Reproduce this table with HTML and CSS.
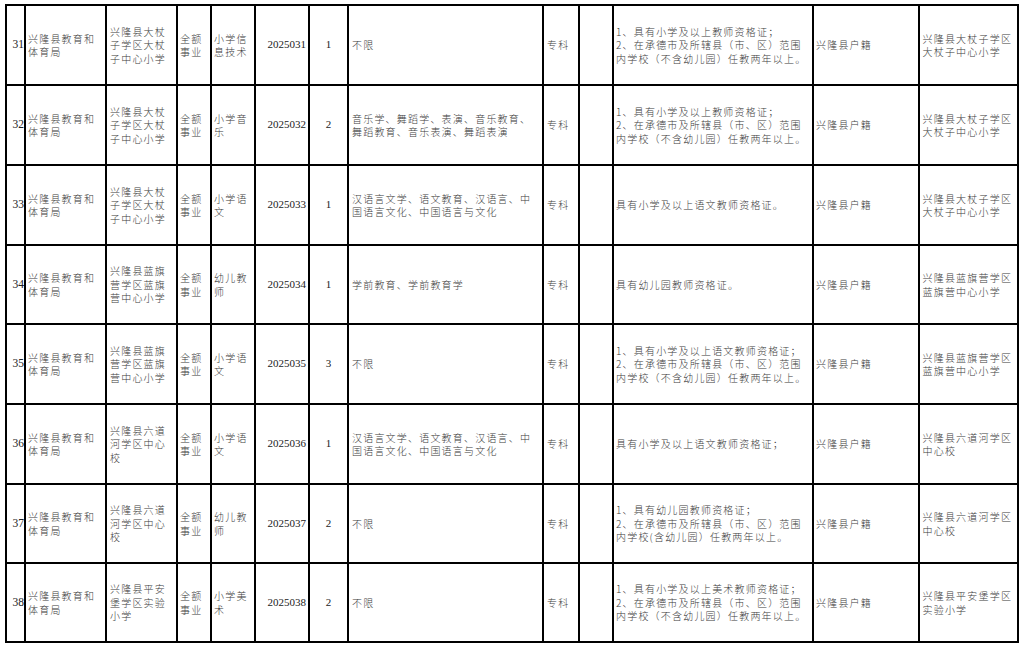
FILE: index.html
```html
<!DOCTYPE html>
<html lang="zh-CN">
<head>
<meta charset="utf-8">
<title>岗位表</title>
<link rel="stylesheet" href="styles.css">
</head>
<body>
<table class="grid">
  <colgroup>
    <col class="c-no"><col class="c-dept"><col class="c-unit"><col class="c-type"><col class="c-post"><col class="c-code"><col class="c-num"><col class="c-major"><col class="c-edu"><col class="c-blank"><col class="c-req"><col class="c-hukou"><col class="c-place">
  </colgroup>
  <tbody>
    <tr class="r78">
      <td class="no">31</td>
      <td>兴隆县教育和<br>体育局</td>
      <td class="unit">兴隆县大杖<br>子学区大杖<br>子中心小学</td>
      <td>全额<br>事业</td>
      <td>小学信<br>息技术</td>
      <td class="code">2025031</td>
      <td class="num">1</td>
      <td class="major">不限</td>
      <td class="edu">专科</td>
      <td></td>
      <td>1、具有小学及以上教师资格证；<br>2、在承德市及所辖县（市、区）范围<br>内学校（不含幼儿园）任教两年以上。</td>
      <td>兴隆县户籍</td>
      <td class="place">兴隆县大杖子学区<br>大杖子中心小学</td>
    </tr>
    <tr class="r78">
      <td class="no">32</td>
      <td>兴隆县教育和<br>体育局</td>
      <td class="unit">兴隆县大杖<br>子学区大杖<br>子中心小学</td>
      <td>全额<br>事业</td>
      <td>小学音<br>乐</td>
      <td class="code">2025032</td>
      <td class="num">2</td>
      <td class="major">音乐学、舞蹈学、表演、音乐教育、<br>舞蹈教育、音乐表演、舞蹈表演</td>
      <td class="edu">专科</td>
      <td></td>
      <td>1、具有小学及以上教师资格证；<br>2、在承德市及所辖县（市、区）范围<br>内学校（不含幼儿园）任教两年以上。</td>
      <td>兴隆县户籍</td>
      <td class="place">兴隆县大杖子学区<br>大杖子中心小学</td>
    </tr>
    <tr class="r78">
      <td class="no">33</td>
      <td>兴隆县教育和<br>体育局</td>
      <td class="unit">兴隆县大杖<br>子学区大杖<br>子中心小学</td>
      <td>全额<br>事业</td>
      <td>小学语<br>文</td>
      <td class="code">2025033</td>
      <td class="num">1</td>
      <td class="major">汉语言文学、语文教育、汉语言、中<br>国语言文化、中国语言与文化</td>
      <td class="edu">专科</td>
      <td></td>
      <td>具有小学及以上语文教师资格证。</td>
      <td>兴隆县户籍</td>
      <td class="place">兴隆县大杖子学区<br>大杖子中心小学</td>
    </tr>
    <tr class="r77">
      <td class="no">34</td>
      <td>兴隆县教育和<br>体育局</td>
      <td class="unit">兴隆县蓝旗<br>营学区蓝旗<br>营中心小学</td>
      <td>全额<br>事业</td>
      <td>幼儿教<br>师</td>
      <td class="code">2025034</td>
      <td class="num">1</td>
      <td class="major">学前教育、学前教育学</td>
      <td class="edu">专科</td>
      <td></td>
      <td>具有幼儿园教师资格证。</td>
      <td>兴隆县户籍</td>
      <td class="place">兴隆县蓝旗营学区<br>蓝旗营中心小学</td>
    </tr>
    <tr class="r78">
      <td class="no">35</td>
      <td>兴隆县教育和<br>体育局</td>
      <td class="unit">兴隆县蓝旗<br>营学区蓝旗<br>营中心小学</td>
      <td>全额<br>事业</td>
      <td>小学语<br>文</td>
      <td class="code">2025035</td>
      <td class="num">3</td>
      <td class="major">不限</td>
      <td class="edu">专科</td>
      <td></td>
      <td>1、具有小学及以上语文教师资格证；<br>2、在承德市及所辖县（市、区）范围<br>内学校（不含幼儿园）任教两年以上。</td>
      <td>兴隆县户籍</td>
      <td class="place">兴隆县蓝旗营学区<br>蓝旗营中心小学</td>
    </tr>
    <tr class="r78">
      <td class="no">36</td>
      <td>兴隆县教育和<br>体育局</td>
      <td class="unit">兴隆县六道<br>河学区中心<br>校</td>
      <td>全额<br>事业</td>
      <td>小学语<br>文</td>
      <td class="code">2025036</td>
      <td class="num">1</td>
      <td class="major">汉语言文学、语文教育、汉语言、中<br>国语言文化、中国语言与文化</td>
      <td class="edu">专科</td>
      <td></td>
      <td>具有小学及以上语文教师资格证；</td>
      <td>兴隆县户籍</td>
      <td class="place">兴隆县六道河学区<br>中心校</td>
    </tr>
    <tr class="r77">
      <td class="no">37</td>
      <td>兴隆县教育和<br>体育局</td>
      <td class="unit">兴隆县六道<br>河学区中心<br>校</td>
      <td>全额<br>事业</td>
      <td>幼儿教<br>师</td>
      <td class="code">2025037</td>
      <td class="num">2</td>
      <td class="major">不限</td>
      <td class="edu">专科</td>
      <td></td>
      <td>1、具有幼儿园教师资格证；<br>2、在承德市及所辖县（市、区）范围<br>内学校(含幼儿园）任教两年以上。</td>
      <td>兴隆县户籍</td>
      <td class="place">兴隆县六道河学区<br>中心校</td>
    </tr>
    <tr class="r77">
      <td class="no">38</td>
      <td>兴隆县教育和<br>体育局</td>
      <td class="unit">兴隆县平安<br>堡学区实验<br>小学</td>
      <td>全额<br>事业</td>
      <td>小学美<br>术</td>
      <td class="code">2025038</td>
      <td class="num">2</td>
      <td class="major">不限</td>
      <td class="edu">专科</td>
      <td></td>
      <td>1、具有小学及以上美术教师资格证；<br>2、在承德市及所辖县（市、区）范围<br>内学校（不含幼儿园）任教两年以上。</td>
      <td>兴隆县户籍</td>
      <td class="place">兴隆县平安堡学区<br>实验小学</td>
    </tr>
  </tbody>
</table>
</body>
</html>
```

FILE: styles.css
```css
html, body {
  margin: 0;
  padding: 0;
  background: #fff;
}

.grid {
  margin: 4px 0 0 5px;
  width: 1014px;
  table-layout: fixed;
  border-collapse: separate;
  border-spacing: 2px;
  background: #000;
  font-family: "Noto Sans CJK SC", "Liberation Serif", sans-serif;
  font-size: 10px;
  font-weight: 300;
  letter-spacing: 1.2px;
  line-height: 13.4px;
  color: #3c3c3c;
}

.c-no { width: 17px; }
.c-dept { width: 79px; }
.c-unit { width: 69px; }
.c-type { width: 32px; }
.c-post { width: 42px; }
.c-code { width: 52px; }
.c-num { width: 37px; }
.c-major { width: 193px; }
.c-edu { width: 34px; }
.c-blank { width: 32px; }
.c-req { width: 198px; }
.c-hukou { width: 104px; }
.c-place { width: 97px; }

.grid td {
  background: #fff;
  padding: 0 0 0 2px;
  vertical-align: middle;
  text-align: left;
  white-space: nowrap;
  overflow: hidden;
}

.r78 td { height: 78px; }
.r77 td { height: 77px; }

.grid td.no {
  padding: 0;
  text-align: right;
  font-family: "Liberation Serif", serif;
  font-size: 11.5px;
  font-weight: 400;
  letter-spacing: 0;
  color: #222;
}

.grid td.code {
  padding: 0 2px 0 0;
  text-align: right;
  font-family: "Liberation Serif", serif;
  font-size: 11px;
  font-weight: 400;
  letter-spacing: 0;
  color: #222;
}

.grid td.num {
  padding: 0;
  text-align: center;
  font-family: "Liberation Serif", serif;
  font-size: 11px;
  font-weight: 400;
  letter-spacing: 0;
  color: #222;
}

.grid td.unit,
.grid td.major,
.grid td.edu {
  padding-left: 3px;
}

.grid td.place {
  padding-left: 2.5px;
}
```
